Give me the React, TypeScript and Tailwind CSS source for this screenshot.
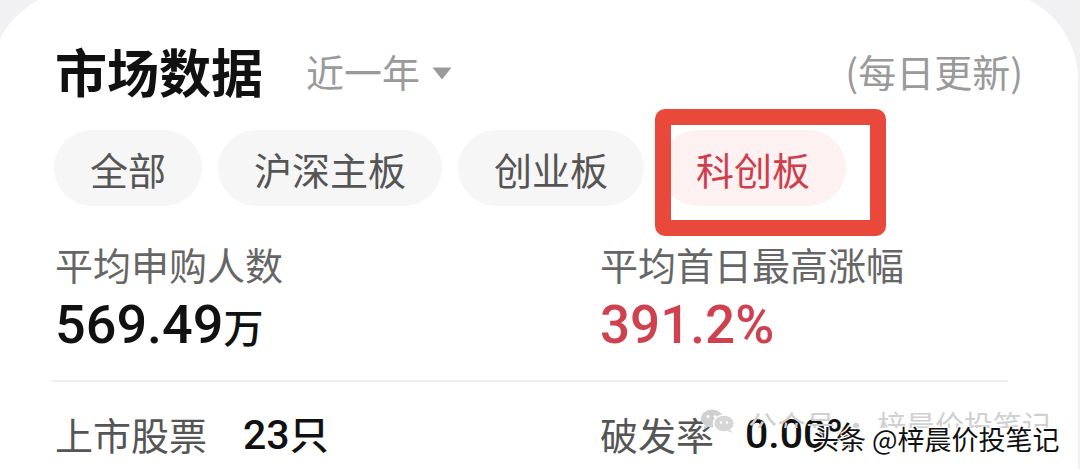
import React from 'react';

const cjk = { fontFamily: '"Noto Sans CJK SC", "Noto Sans", sans-serif' };
const num = { fontFamily: 'Roboto, "Noto Sans CJK SC", sans-serif' };

const tabs = ['全部', '沪深主板', '创业板', '科创板'];

const WeChatIcon: React.FC = () => (
  <svg width="36" height="24" viewBox="0 0 36 24">
    <ellipse cx="12" cy="9.5" rx="11" ry="9" fill="#cfcfcf" />
    <path d="M5 16 L3 21 L9 17.5 Z" fill="#cfcfcf" />
    <ellipse cx="24" cy="14.5" rx="10.5" ry="8.5" fill="#d6d6d6" stroke="#fff" strokeWidth="1.5" />
    <path d="M30 21 L33 24 L27 22 Z" fill="#d6d6d6" />
    <circle cx="8" cy="7.5" r="1.5" fill="#fff" />
    <circle cx="15" cy="7.5" r="1.5" fill="#fff" />
    <circle cx="21" cy="13.5" r="1.3" fill="#fff" />
    <circle cx="27" cy="13.5" r="1.3" fill="#fff" />
  </svg>
);

const App: React.FC = () => {
  const active = 3;

  return (
    <div className="relative w-[1080px] h-[469px] overflow-hidden bg-[#f1f1f4]" style={cjk}>
      <div className="ml-[-10px] mt-[-10px] w-[1088px] h-[500px] bg-white rounded-t-[90px] pl-[65px] pr-[55px] pt-[46px]">
        {/* header */}
        <div className="flex items-center justify-between h-[70px]">
          <div className="flex items-center">
            <h1 className="text-[52px] leading-[70px] font-bold text-[#111]">市场数据</h1>
            <div className="flex items-center ml-[43px] text-[#9a9a9a]">
              <span className="text-[38px] leading-[70px]">近一年</span>
              <svg width="20" height="13" viewBox="0 0 20 13" className="ml-[12px] mt-[4px]">
                <path d="M0.5 0.5 H19.5 L10 12.5 Z" fill="#9a9a9a" />
              </svg>
            </div>
          </div>
          <span className="text-[38px] leading-[70px] text-[#9a9a9a]">(每日更新)</span>
        </div>

        {/* tabs */}
        <div className="flex items-center gap-[16px] mt-[24px] ml-[-1px]">
          {tabs.map((t, i) => (
            <div
              key={t}
              className={
                i === active
                  ? 'h-[76px] px-[36px] rounded-full bg-[#fdf1f2] text-[#cf3e4c] text-[38px] flex items-center'
                  : 'h-[76px] px-[36px] rounded-full bg-[#f6f6f6] text-[#555] text-[38px] flex items-center'
              }
            >
              {t}
            </div>
          ))}
        </div>

        {/* stats */}
        <div className="grid grid-cols-[545px_1fr] mt-[36px]">
          <div>
            <div className="text-[38px] leading-[44px] text-[#666]">平均申购人数</div>
            <div className="mt-[9px] leading-[60px] text-[#111] font-medium" style={num}>
              <span className="text-[54px]">569.49</span>
              <span className="text-[40px]" style={cjk}>万</span>
            </div>
          </div>
          <div>
            <div className="text-[38px] leading-[44px] text-[#666]">平均首日最高涨幅</div>
            <div className="mt-[9px] leading-[60px] text-[#d0414f] font-medium text-[53px]" style={num}>
              391.2%
            </div>
          </div>
        </div>

        <div className="h-[2px] bg-[#efefef] mt-[12px] ml-[-3px] mr-[15px]" />

        <div className="grid grid-cols-[545px_1fr] mt-[28px]">
          <div className="flex items-center leading-[44px]">
            <span className="text-[38px] text-[#555]">上市股票</span>
            <span className="ml-[36px] text-[41px] text-[#111] font-medium" style={num}>
              23<span className="text-[39px]" style={cjk}>只</span>
            </span>
          </div>
          <div className="flex items-center leading-[44px]">
            <span className="text-[38px] text-[#555]">破发率</span>
            <span className="ml-[31px] text-[41px] text-[#111] font-medium" style={num}>0.00%</span>
          </div>
        </div>
      </div>

      {/* highlight annotation */}
      <div className="absolute left-[655px] top-[109px] w-[231px] h-[127px] border-[16px] border-[#e8493a] rounded-[10px]" />

      {/* watermarks */}
      <div className="absolute left-[700px] top-[409px] flex items-start gap-[12px] text-[#d0d0d0]">
        <WeChatIcon />
        <div className="h-[19px] overflow-hidden">
          <span className="text-[29px] leading-[36px] block mt-[-3px] whitespace-nowrap">公众号 · 梓晨价投笔记</span>
        </div>
      </div>
      <div
        className="absolute left-[812px] top-[421px] text-[27px] leading-[36px] text-[#111] whitespace-nowrap"
        style={{ textShadow: '0 0 2px #fff, 1px 1px 1px #fff, -1px -1px 1px #fff, 1px -1px 1px #fff, -1px 1px 1px #fff' }}
      >
        头条 @梓晨价投笔记
      </div>
    </div>
  );
};

export default App;
